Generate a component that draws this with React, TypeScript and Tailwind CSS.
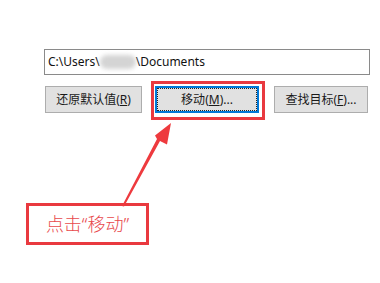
const font = { fontFamily: '"Noto Sans", "Noto Sans CJK SC", sans-serif' };

const Btn = ({ label, hot, rest, width, focused }: { label: string; hot: string; rest: string; width: string; focused?: boolean }) => (
  <div
    className={`${width} h-[27px] flex items-center justify-center bg-[#e1e1e1] text-[12px] text-[#1a1a1a] ${
      focused ? "border-2 border-[#0078d7]" : "border border-[#adadad]"
    }`}
  >
    {focused ? (
      <div className="w-full h-full border border-dotted border-[#222] flex items-center justify-center">
        {label}(<span className="underline">{hot}</span>){rest}
      </div>
    ) : (
      <span>
        {label}(<span className="underline">{hot}</span>){rest}
      </span>
    )}
  </div>
);

export default function App() {
  return (
    <div className="relative w-[380px] h-[283px] bg-white overflow-hidden" style={font}>
      <div className="pt-[49px] pl-[44px]">
        {/* path field */}
        <div className="w-[326px] h-[26px] border border-[#8a8a8a] flex items-center pl-[3px] text-[12px] text-[#111]">
          <span>C:\Users\</span>
          <span className="w-[36px] h-[14px] bg-[#d4d4d4] rounded-full blur-[2px]"></span>
          <span>\Documents</span>
        </div>

        {/* buttons */}
        <div className="flex mt-[11px] ml-[1px]">
          <Btn label="还原默认值" hot="R" rest="" width="w-[97px]" />
          <div className="relative ml-[13px]">
            <Btn label="移动" hot="M" rest="..." width="w-[104px]" focused />
            <div className="absolute -left-[4px] -top-[5px] w-[114px] h-[39px] border-[3px] border-[#e9393f]"></div>
          </div>
          <div className="ml-[15px]">
            <Btn label="查找目标" hot="F" rest="..." width="w-[94px]" />
          </div>
        </div>
      </div>

      {/* callout */}
      <div className="ml-[26px] mt-[90px] w-[123px] h-[42px] border-[3px] border-[#e9393f] flex items-center justify-center text-[18px] font-light text-[#e8484c]">
        点击“移动”
      </div>

      <svg className="absolute left-0 top-0" width="380" height="283" viewBox="0 0 380 283">
        <polygon
          fill="#ee3a3e"
          points="122,206 124,206.5 160,141 167,144.5 171,123 155,135.5 157,139"
        />
      </svg>
    </div>
  );
}
